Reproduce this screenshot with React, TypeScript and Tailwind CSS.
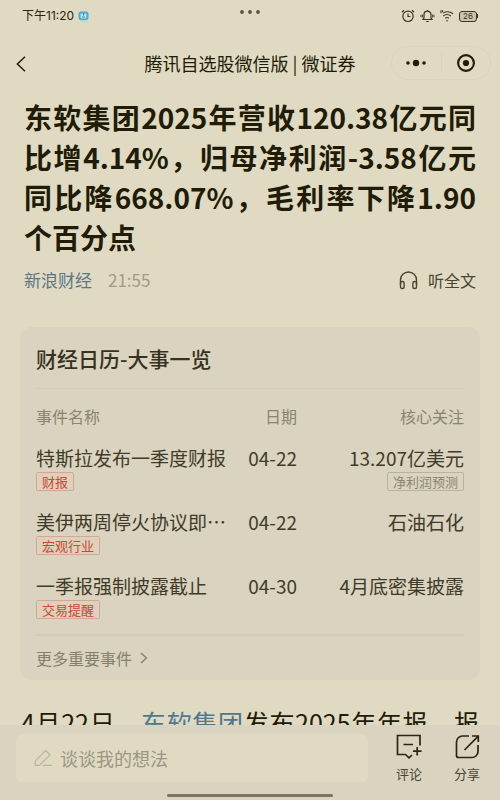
import React from "react";

type EventRow = {
  name: string;
  tag: string;
  date: string;
  focus: string;
  focusTag?: string;
};

const events: EventRow[] = [
  { name: "特斯拉发布一季度财报", tag: "财报", date: "04-22", focus: "13.207亿美元", focusTag: "净利润预测" },
  { name: "美伊两周停火协议即…", tag: "宏观行业", date: "04-22", focus: "石油石化" },
  { name: "一季报强制披露截止", tag: "交易提醒", date: "04-30", focus: "4月底密集披露" },
];

function StatusBar() {
  return (
    <div className="relative flex h-8 shrink-0 items-center justify-between pr-[22px] pl-[22px]">
      <div className="flex items-center gap-1 font-['Inter','Noto_Sans_CJK_SC',sans-serif] text-xs text-[#2a2510]">
        <span>下午11:20</span>
        <svg width="11" height="11" viewBox="0 0 11 11" fill="none" aria-hidden="true">
          <rect x="0.5" y="0.5" width="10" height="8.5" rx="2.5" fill="#4aa9d4" />
          <rect x="2.5" y="2.5" width="6" height="5" rx="1" fill="#bfe0e2" />
          <path d="M5.5 2v2.5M4 5.5c.8 1 2.2 1 3 0" stroke="#2689bd" strokeWidth="1" />
          <path d="M2 10h7" stroke="#9ed0dd" />
        </svg>
      </div>
      <svg className="absolute top-[10px] left-1/2 -translate-x-1/2" width="22" height="4" viewBox="0 0 22 4" fill="#5a543f" aria-hidden="true">
        <circle cx="3" cy="2" r="1.9" />
        <circle cx="11" cy="2" r="1.9" />
        <circle cx="19" cy="2" r="1.9" />
      </svg>
      <div className="flex items-center gap-[5px] text-[#3a3521]">
        <svg width="14" height="14" viewBox="0 0 14 14" fill="none" stroke="currentColor" strokeWidth="1.2" aria-hidden="true">
          <circle cx="7" cy="7.3" r="5.2" />
          <path d="M7 4.5v3h2.4M1 3.2 3 1.3M13 3.2l-2-1.9" />
        </svg>
        <svg width="15" height="14" viewBox="0 0 15 14" fill="none" stroke="currentColor" strokeWidth="1.2" aria-hidden="true">
          <path d="M3 10.5h9L11 9V5.7a3.5 3.5 0 0 0-7 0V9zM7.5 1v1.2M6.3 12.5h2.4M2.2 5.5v3M12.8 5.5v3M.6 6.4v1.2M14.4 6.4v1.2" />
        </svg>
        <svg width="14" height="14" viewBox="0 0 14 14" fill="none" stroke="currentColor" strokeWidth="1.1" aria-hidden="true">
          <path d="M3.2 4.1c3-1.8 7-1.5 9.8.7M3.2 7c2.2-1.8 5.4-1.7 7.7 0M5.2 9.3c1.1-.9 2.6-.9 3.7 0M1 1.2v3M2.6 1.2v2" />
          <circle cx="7" cy="11.7" r=".8" fill="currentColor" stroke="none" />
        </svg>
        <span className="flex h-[11px] items-center">
          <span className="flex h-[11px] w-[18px] items-center justify-center rounded-[3px] border border-[#3a3521] bg-[#cbc4ac] font-[Inter,sans-serif] text-[8px] leading-none">
            26
          </span>
          <span className="h-1 w-px bg-[#3a3521]" />
        </span>
      </div>
    </div>
  );
}

function NavBar() {
  return (
    <header className="relative flex h-16 shrink-0 items-center justify-center pb-[2px] text-[#211c06]">
      <button type="button" aria-label="返回" className="absolute top-5 left-3 p-1">
        <svg width="12" height="16" viewBox="0 0 12 16" fill="none" stroke="currentColor" strokeWidth="1.5" aria-hidden="true">
          <path d="M9 .8 1.4 8 9 15.2" />
        </svg>
      </button>
      <h2 className="text-lg leading-6">腾讯自选股微信版 | 微证券</h2>
      <div className="absolute top-[14px] right-[9px] flex h-[34px] w-[100px] items-center rounded-full border border-[#dad4bf]">
        <button type="button" aria-label="更多" className="flex flex-1 justify-center">
          <svg width="20" height="8" viewBox="0 0 20 8" fill="currentColor" aria-hidden="true">
            <circle cx="2" cy="4" r="1.8" />
            <circle cx="10" cy="4" r="3.2" />
            <circle cx="18" cy="4" r="1.8" />
          </svg>
        </button>
        <span className="h-5 w-px bg-[#dad4bf]" />
        <button type="button" aria-label="关闭" className="flex flex-1 justify-center">
          <svg width="18" height="18" viewBox="0 0 18 18" aria-hidden="true">
            <circle cx="9" cy="9" r="7.9" fill="none" stroke="currentColor" strokeWidth="2.1" />
            <circle cx="9" cy="9" r="3.1" fill="currentColor" />
          </svg>
        </button>
      </div>
    </header>
  );
}

function CalendarCard() {
  return (
    <section className="mx-5 mt-8 rounded-xl bg-[#dad3bf] px-4">
      <h2 className="h-[62px] border-b border-[#d3ccb8] text-[21px] leading-[62px] font-medium text-[#37321f]">
        财经日历-大事一览
      </h2>
      <table className="w-full table-fixed border-b-2 border-[#d1cab6]">
        <colgroup>
          <col />
          <col className="w-[68px]" />
          <col className="w-[167px]" />
        </colgroup>
        <thead>
          <tr className="h-[54px] text-base text-[#89846f]">
            <th className="text-left font-normal">事件名称</th>
            <th className="text-right font-normal">日期</th>
            <th className="text-right font-normal">核心关注</th>
          </tr>
        </thead>
        <tbody>
          {events.map((e) => (
            <tr key={e.name} className="h-16 align-top text-[19px] leading-[29px] text-[#403b29]">
              <td>
                <div className="truncate">{e.name}</div>
                <div className="flex">
                  <span className="rounded-xs border border-[#d0a996] bg-[#e0cfba] px-[5px] text-[13px] leading-[17px] text-[#c64a35]">
                    {e.tag}
                  </span>
                </div>
              </td>
              <td className="text-right">{e.date}</td>
              <td>
                <div className="text-right">{e.focus}</div>
                {e.focusTag && (
                  <div className="flex justify-end">
                    <span className="rounded-xs border border-[#b9b39e] px-[5px] text-[13px] leading-[17px] text-[#8a8570]">
                      {e.focusTag}
                    </span>
                  </div>
                )}
              </td>
            </tr>
          ))}
        </tbody>
      </table>
      <a href="#events" className="flex h-11 items-center gap-2 text-base text-[#858069]">
        更多重要事件
        <svg width="8" height="12" viewBox="0 0 8 12" fill="none" stroke="currentColor" strokeWidth="1.4" aria-hidden="true">
          <path d="m1 1 5.4 5L1 11" />
        </svg>
      </a>
    </section>
  );
}

function BottomBar() {
  return (
    <footer className="shrink-0 bg-[#dad3bf]">
      <div className="flex h-[57px] items-start pt-[9px] pr-5 pl-4">
        <label className="flex h-12 min-w-0 flex-1 items-center gap-2 rounded-md bg-[#e0dac2] pl-[18px]">
          <svg width="18" height="18" viewBox="0 0 18 18" fill="none" stroke="#b9b39e" strokeWidth="1.2" className="shrink-0" aria-hidden="true">
            <path d="M11.6 1.5 16 5.8 5.5 16.3H1.2v-4.4zM9 16.4h9" />
          </svg>
          <input
            type="text"
            aria-label="谈谈我的想法"
            placeholder="谈谈我的想法"
            className="w-full min-w-0 bg-transparent text-lg leading-7 text-[#403b29] outline-none placeholder:text-[#9b9682]"
          />
        </label>
        <div className="ml-7 flex gap-8 text-[13px] leading-4 text-[#4a4532]">
          <button type="button" className="flex flex-col items-center gap-[6px]">
            <svg width="26" height="26" viewBox="0 0 26 26" fill="none" stroke="#2b2610" strokeWidth="1.7" aria-hidden="true">
              <path d="M24 11.5V1.5H1.5v19h8l3.5 3.3 3-2.8" />
              <path d="M7.5 10.5H17M17 17.2h8.5M21.2 13v8.5" />
            </svg>
            评论
          </button>
          <button type="button" className="flex flex-col items-center gap-[6px]">
            <svg width="26" height="26" viewBox="0 0 26 26" fill="none" stroke="#2b2610" strokeWidth="1.7" aria-hidden="true">
              <path d="M15 2H8.5a6 6 0 0 0-6 6v13.500a2 2 0 0 0 2 2H18a6 6 0 0 0 6-6V11" />
              <path d="M10.5 16 24 2.300M18 2h6.300v6" />
            </svg>
            分享
          </button>
        </div>
      </div>
      <div className="flex h-[18px] items-center justify-center pt-2">
        <span className="h-[3px] w-1/3 rounded-full bg-[#7b745f]" />
      </div>
    </footer>
  );
}

export default function App() {
  return (
    <div lang="zh-CN" className="flex h-dvh flex-col bg-[#e0dac2] font-['Noto_Sans_CJK_SC',sans-serif]">
      <StatusBar />
      <NavBar />
      <main className="min-h-0 flex-1 overflow-hidden pt-px">
        <h1 className="mx-6 text-justify text-[28px] leading-10 font-bold text-[#211c06]">
          东软集团2025年营收120.38亿元同比增4.14%，归母净利润-3.58亿元同比降668.07%，毛利率下降1.90个百分点
        </h1>
        <div className="mt-2 flex h-[30px] items-center gap-4 px-6 text-[17px]">
          <a href="#source" className="text-[#5b7688]">新浪财经</a>
          <time className="text-[#a09b86]">21:55</time>
          <button type="button" className="ml-auto flex items-center gap-[10px] text-base text-[#4a4532]">
            <svg width="19" height="19" viewBox="0 0 19 19" fill="none" stroke="currentColor" strokeWidth="1.4" aria-hidden="true">
              <path d="M1.5 14V9a8 8 0 0 1 16 0v5" />
              <rect x="1.5" y="10.5" width="3.6" height="7" rx="1.5" />
              <rect x="13.9" y="10.5" width="3.6" height="7" rx="1.5" />
            </svg>
            听全文
          </button>
        </div>
        <CalendarCard />
        <p className="mx-[21px] mt-[22px] text-justify text-[25px] leading-10 text-[#211c06] [text-align-last:justify]">
          4月22日，<a href="#stock" className="text-[#4e7890]">东软集团</a>发布2025年年报，报
        </p>
      </main>
      <BottomBar />
    </div>
  );
}
